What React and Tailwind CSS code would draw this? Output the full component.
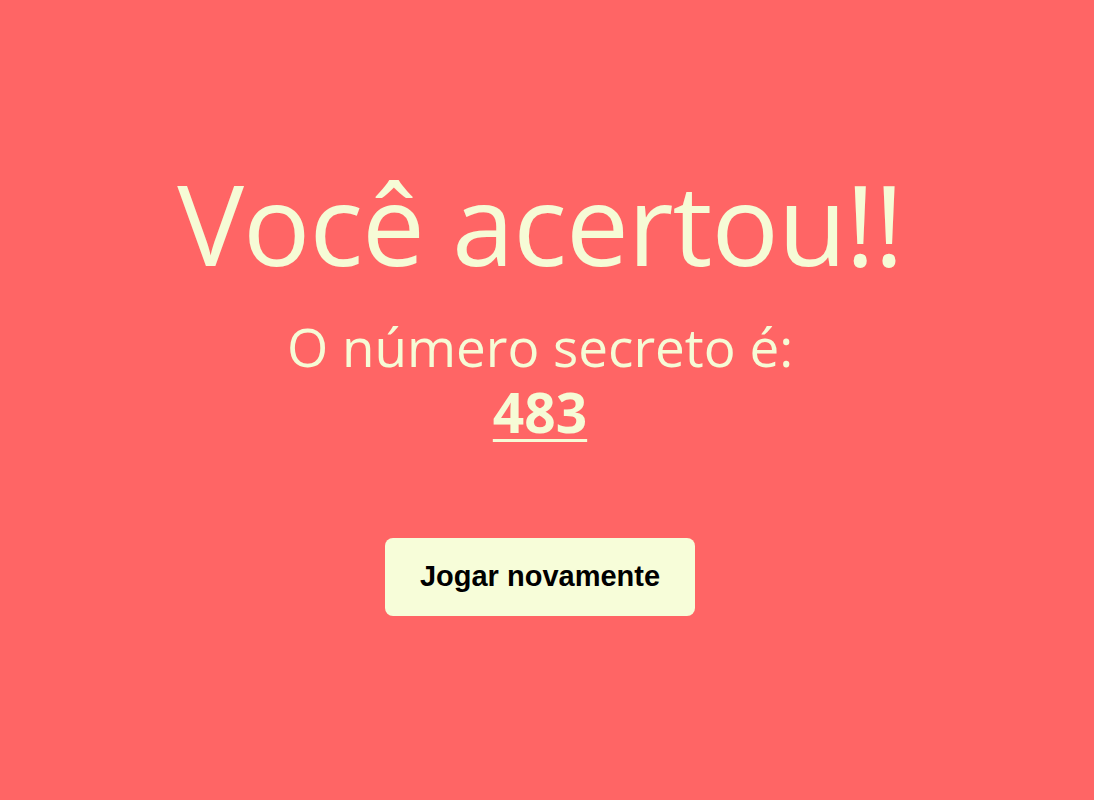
import React from 'react';

export default function App() {
    return (
        <div className="min-h-screen w-full bg-[#ff6565] flex flex-col items-center pt-[148px] pr-[14px] font-['Open_Sans',sans-serif] text-[#f6fbd6]">
            <h1 className="text-[112px] leading-[150px] font-normal tracking-[-1px]">Você acertou!!</h1>
            <h2 className="mt-[16px] text-[53px] leading-[66px] font-normal text-center">
                <span className="block">O número secreto é:</span>
                <span className="block font-bold text-[55px] leading-[64px]">
                    <span className="underline decoration-[3px] underline-offset-[6px]">483</span>
                </span>
            </h2>
            <button className="mt-[94px] w-[310px] h-[78px] rounded-lg bg-[#f7fdd9] text-black font-bold text-[29px] font-['Liberation_Sans',Arial,sans-serif]">
                Jogar novamente
            </button>
        </div>
    );
}
